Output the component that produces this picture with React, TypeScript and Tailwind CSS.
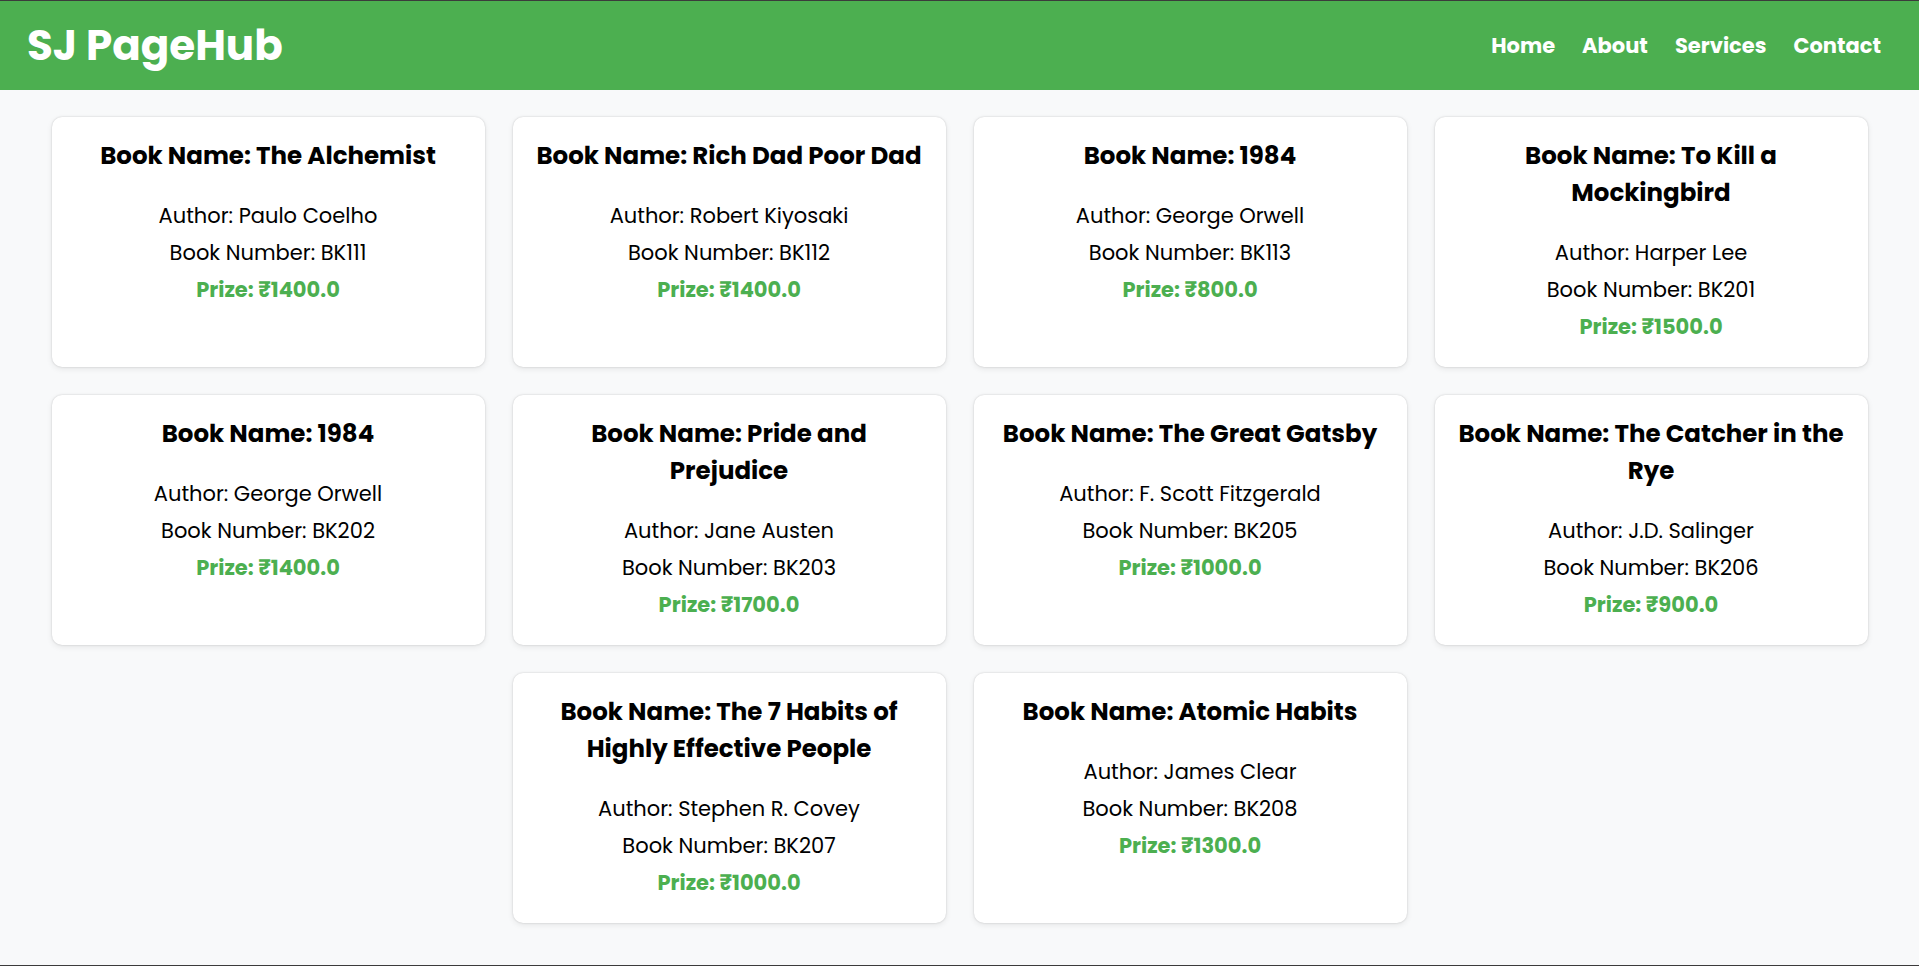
const books = [
  { name: 'The Alchemist', author: 'Paulo Coelho', number: 'BK111', prize: '1400.0' },
  { name: 'Rich Dad Poor Dad', author: 'Robert Kiyosaki', number: 'BK112', prize: '1400.0' },
  { name: '1984', author: 'George Orwell', number: 'BK113', prize: '800.0' },
  { name: 'To Kill a Mockingbird', author: 'Harper Lee', number: 'BK201', prize: '1500.0' },
  { name: '1984', author: 'George Orwell', number: 'BK202', prize: '1400.0' },
  { name: 'Pride and Prejudice', author: 'Jane Austen', number: 'BK203', prize: '1700.0' },
  { name: 'The Great Gatsby', author: 'F. Scott Fitzgerald', number: 'BK205', prize: '1000.0' },
  { name: 'The Catcher in the Rye', author: 'J.D. Salinger', number: 'BK206', prize: '900.0' },
  { name: 'The 7 Habits of Highly Effective People', author: 'Stephen R. Covey', number: 'BK207', prize: '1000.0' },
  { name: 'Atomic Habits', author: 'James Clear', number: 'BK208', prize: '1300.0' },
]

export default function App() {
  return (
    <div className="min-h-[966px] bg-[#f8f9fa] border-y border-[#3b3b3b] text-black font-['Poppins','Inter','Noto_Sans',sans-serif]">
      {/* Header */}
      <header className="h-[89px] bg-[#4caf50] flex items-center justify-between pl-[27px] pr-[38px]">
        <h1 className="text-[42px] font-bold text-white">SJ PageHub</h1>
        <nav className="flex items-center gap-[27px]">
          {['Home', 'About', 'Services', 'Contact'].map((item) => (
            <a key={item} href="#" className="text-[21px] font-bold text-white">
              {item}
            </a>
          ))}
        </nav>
      </header>

      {/* Books */}
      <main className="flex flex-wrap justify-center gap-[28px] pt-[27px] pb-[39px]">
        {books.map((book, i) => (
          <div
            key={i}
            className="w-[433px] bg-white rounded-[10px] shadow-[0_0_2px_rgba(0,0,0,0.18),0_2px_6px_rgba(0,0,0,0.08)] px-[20px] pt-[20px] pb-[22px] text-center"
          >
            <h3 className="text-[24.5px] leading-[37px] font-bold mb-[23px]">
              Book Name: {book.name}
            </h3>
            <p className="text-[21px] leading-[37px]">Author: {book.author}</p>
            <p className="text-[21px] leading-[37px]">Book Number: {book.number}</p>
            <p className="text-[21px] leading-[37px] font-bold text-[#4caf50]">
              Prize: ₹{book.prize}
            </p>
          </div>
        ))}
      </main>
    </div>
  )
}
